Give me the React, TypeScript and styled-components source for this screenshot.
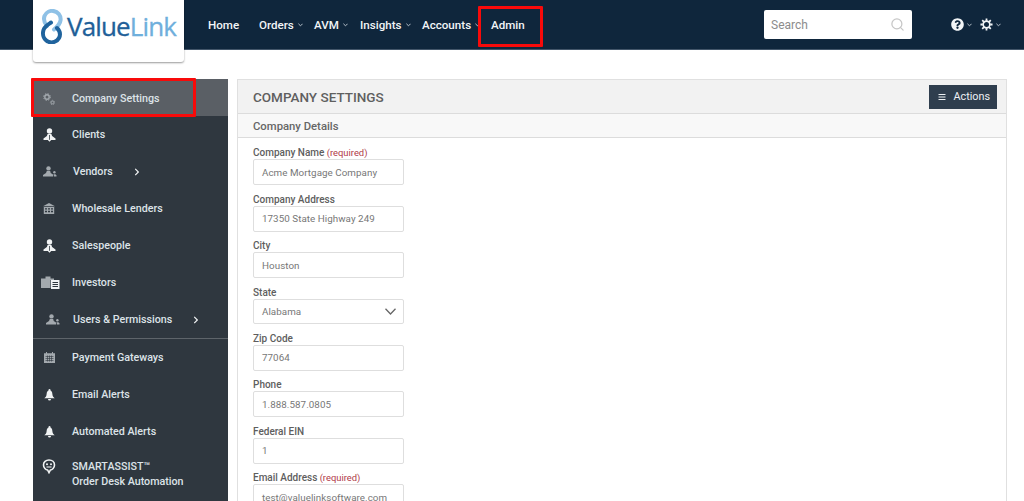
import React from 'react';
import styled, { createGlobalStyle } from 'styled-components';
import { FiSearch } from 'react-icons/fi';
import { FaQuestionCircle, FaBars, FaChevronRight } from 'react-icons/fa';

const GlobalStyle = createGlobalStyle`
  html, body {
    margin: 0;
    padding: 0;
    height: 100%;
    overflow: hidden;
    background: #fff;
    font-family: Roboto, "Liberation Sans", sans-serif;
  }
  * { box-sizing: border-box; }
`;

const Page = styled.div`
  position: relative;
  width: 1024px;
  height: 501px;
  overflow: hidden;
`;

const Header = styled.header`
  display: flex;
  align-items: center;
  height: 50px;
  padding-left: 208px;
  background: #0f263c;
  border-bottom: 1px solid #43566a;
`;

const LogoBox = styled.div`
  position: absolute;
  left: 33px;
  top: 0;
  width: 151px;
  height: 62px;
  display: flex;
  align-items: center;
  gap: 4px;
  padding: 0 0 10px 8px;
  background: #fff;
  border-radius: 0 0 3px 3px;
  box-shadow: 0 1px 2px rgba(0, 0, 0, 0.4);
`;

const LogoText = styled.span`
  font-family: "Open Sans", sans-serif;
  font-size: 26px;
  letter-spacing: -0.85px;
  color: #215f98;
  -webkit-text-stroke: 0.3px #215f98;
  span {
    color: #6fafdc;
    -webkit-text-stroke: 0.3px #6fafdc;
  }
`;

const NavItem = styled.div<{ $w: number }>`
  display: flex;
  align-items: center;
  width: ${(p) => p.$w}px;
  font-size: 11.6px;
  font-weight: 500;
  color: #f2f5f7;
`;

const Caret = styled.svg`
  width: 5px;
  height: 4px;
  margin-left: 4px;
  fill: none;
  stroke: #b8c2cb;
  stroke-width: 1.2;
`;

const HeaderRight = styled.div`
  display: flex;
  align-items: center;
  margin-left: auto;
  padding-right: 15px;
  color: #f2f5f7;
`;

const SearchBox = styled.div`
  display: flex;
  align-items: center;
  justify-content: space-between;
  width: 148px;
  height: 29px;
  margin-right: 39px;
  padding: 0 7px;
  background: #fff;
  border-radius: 2px;
  font-size: 12px;
  color: #8c8c8c;
  svg { width: 15px; height: 15px; color: #c6c6c6; }
`;

const IconButton = styled.div`
  display: flex;
  align-items: center;
  margin-right: 8px;
  svg:first-child { width: 13px; height: 13px; }
  ${Caret} { margin-left: 3px; }
`;

const Body = styled.div`
  display: flex;
  align-items: flex-start;
  gap: 9px;
  padding: 29px 17px 0 33px;
`;

const Sidebar = styled.nav`
  width: 195px;
  flex: none;
  background: #2f373f;
  height: 430px;
`;

const SideRow = styled.div<{ $active?: boolean; $divider?: boolean; $tall?: boolean }>`
  display: flex;
  align-items: ${(p) => (p.$tall ? 'flex-start' : 'center')};
  height: ${(p) => (p.$tall ? '56px' : p.$divider ? '38px' : '37px')};
  padding-top: ${(p) => (p.$tall ? '9px' : p.$active ? '2px' : '0')};
  background: ${(p) => (p.$active ? '#5a5f65' : 'transparent')};
  border-top: ${(p) => (p.$divider ? '1px solid #5e646a' : 'none')};
  font-size: 10.7px;
  font-weight: 500;
  line-height: 15px;
  color: #dde3e8;
`;

const SideIcon = styled.div<{ $w?: number; $left?: number; $dim?: boolean }>`
  display: flex;
  justify-content: center;
  flex: none;
  width: ${(p) => p.$w ?? 39}px;
  padding-left: ${(p) => p.$left ?? 0}px;
  padding-right: ${(p) => (p.$w ?? 39) - 32}px;
  color: ${(p) => (p.$dim ? '#a3a9ae' : '#f1f3f4')};
`;

const Chevron = styled.span<{ $gap: number }>`
  display: flex;
  margin-left: ${(p) => p.$gap}px;
  color: #f1f3f4;
  svg { width: 8px; height: 8px; }
`;

const Panel = styled.main`
  flex: 1;
  height: 430px;
  background: #fff;
  border: 1px solid #e0e0e0;
  border-bottom: none;
`;

const TitleBar = styled.div`
  display: flex;
  align-items: center;
  justify-content: space-between;
  height: 34px;
  padding: 0 9px 0 15px;
  background: #f2f2f2;
  border-bottom: 1px solid #dcdcdc;
`;

const Title = styled.h1`
  margin: 0;
  font-size: 13.5px;
  font-weight: 500;
  color: #5f5f5f;
`;

const ActionsButton = styled.button`
  display: flex;
  align-items: center;
  gap: 7px;
  height: 24px;
  padding: 0 7px 0 9px;
  background: #2f3e4e;
  border: none;
  font-family: inherit;
  font-size: 10.8px;
  color: #eef1f4;
  svg { width: 8px; height: 8px; }
`;

const SubBar = styled.div`
  display: flex;
  align-items: center;
  height: 24px;
  padding: 1px 0 0 15px;
  background: #f8f8f8;
  border-bottom: 1px solid #dcdcdc;
  font-size: 11.3px;
  font-weight: 500;
  color: #666;
`;

const Form = styled.form`
  display: flex;
  flex-direction: column;
  padding: 8.4px 0 0 15px;
`;

const Field = styled.div`
  display: flex;
  flex: none;
  flex-direction: column;
  width: 151px;
  height: 46.4px;
`;

const Label = styled.label`
  height: 13px;
  line-height: 13px;
  font-size: 10px;
  font-weight: 500;
  color: #5e5e5e;
  white-space: nowrap;
  em {
    font-style: normal;
    font-weight: 400;
    font-size: 9.4px;
    color: #b03a48;
  }
`;

const Input = styled.div<{ $select?: boolean }>`
  display: flex;
  align-items: center;
  justify-content: space-between;
  height: ${(p) => (p.$select ? '25px' : '26px')};
  padding: 0 7px 0 8px;
  background: #fff;
  border: 1px solid #dedede;
  border-radius: 2px;
  font-size: 9.8px;
  letter-spacing: 0.05px;
  color: #777;
`;

const SelectArrow = styled.svg`
  width: 11px;
  height: 7px;
  fill: none;
  stroke: #666;
  stroke-width: 1.3;
`;

const Highlight = styled.div<{ $l: number; $t: number; $w: number; $h: number }>`
  position: absolute;
  left: ${(p) => p.$l}px;
  top: ${(p) => p.$t}px;
  width: ${(p) => p.$w}px;
  height: ${(p) => p.$h}px;
  border: 3px solid #f80a0a;
  border-radius: 1px;
`;

const LinkMark = () => (
  <svg width="22" height="35" viewBox="0 0 22 35" fill="none" strokeWidth="4" strokeLinecap="round">
    <path d="M6 17C3 13.5 2.5 10 3.5 7C5 3.2 9 1.6 12 1.9C17 2.3 20 6.5 19.6 11C19.2 15 16 18 13 20.5" stroke="#8fc1e6" />
    <path d="M16 19C19 22 19.5 26 18 29C16 33 11 34 8 33C3 31 1 26 2.5 21C3.5 17.5 7 15.5 10 13.5" stroke="#1f639d" />
  </svg>
);

const CaretIcon = () => (
  <Caret viewBox="0 0 6 4">
    <path d="M0.5 0.5 L3 3 L5.5 0.5" />
  </Caret>
);

const GearIcon = () => (
  <svg viewBox="0 0 14 14" fill="none" stroke="currentColor">
    <circle cx="7" cy="7" r="3.6" strokeWidth="1.8" />
    <path d="M7 0.5v2.5M7 11v2.500M0.500 7h2.500M11 7h2.500M2.400 2.400l1.800 1.800M9.800 9.800l1.800 1.800M2.400 11.600l1.800-1.800M9.800 4.200l1.800-1.800" strokeWidth="1.900" />
  </svg>
);

const GearsIcon = () => (
  <svg width="12" height="12" viewBox="0 0 12 12" fill="none" stroke="currentColor">
    <circle cx="4" cy="4" r="2.200" strokeWidth="1.400" />
    <circle cx="4" cy="4" r="3.400" strokeWidth="1" strokeDasharray="1.300 1.400" />
    <circle cx="9.500" cy="9.500" r="1.300" strokeWidth="1" />
    <circle cx="9.500" cy="9.500" r="2.200" strokeWidth="0.800" strokeDasharray="1 0.800" />
  </svg>
);

const PersonIcon = () => (
  <svg width="13" height="14" viewBox="0 0 13 14" fill="currentColor">
    <circle cx="6.500" cy="3" r="2.700" />
    <path d="M4.600 6h3.800l.7 2 3.400 2.400V12H8.200l-1.700 1.800L4.800 12H.5v-1.600L3.900 8z" />
    <path d="M6.500 7v4.800" stroke="#2f373f" strokeWidth="0.800" />
  </svg>
);

const TeamIcon = () => (
  <svg width="14" height="11" viewBox="0 0 14 11" fill="currentColor">
    <circle cx="5.500" cy="2.400" r="2.200" />
    <path d="M3.800 5h3.400l.5 2L10 8.600V10.500H0V9l3-2z" />
    <circle cx="11.400" cy="6.200" r="1.200" />
    <path d="M10.500 8.200h1.800l1.200 1v1.300h-2.600z" />
  </svg>
);

const BankIcon = () => (
  <svg width="12" height="11" viewBox="0 0 12 11" fill="currentColor">
    <path d="M6 0 12 3.200H0z" />
    <path d="M.8 4h10.400v7H.8zM2 5.300v1.300h2V5.300zm3 0v1.300h2V5.300zm3 0v1.300h2V5.300zM2 7.800v1.400h2V7.800zm3 0v1.400h2V7.800zm3 0v1.400h2V7.800z" fillRule="evenodd" />
  </svg>
);

const InvestorsIcon = () => (
  <svg width="19" height="13" viewBox="0 0 19 13" style={{ marginLeft: 2 }}>
    <path d="M0 2.500h4.500V.5h5v2H13V4H9.500v8H0Z" fill="#a3a9ae" />
    <rect x="10" y="4" width="8.500" height="9" fill="#f1f3f4" />
    <path d="M11.500 6.500h5.500M11.500 8.500h5.500M11.500 10.500h5.500" stroke="#2f373f" strokeWidth="1" />
  </svg>
);

const CalendarIcon = () => (
  <svg width="11" height="11" viewBox="0 0 11 11" fill="currentColor">
    <path d="M2 0h1v1.200h5V0h1v1.200h2V11H0V1.200h2z" />
    <path d="M1.500 4.500h8M1.500 6.500h8M1.500 8.500h8M3.500 3.500v6M5.500 3.500v6M7.500 3.500v6" stroke="#2f373f" strokeWidth="0.600" />
  </svg>
);

const BellIcon = () => (
  <svg width="11" height="12" viewBox="0 0 11 12" fill="currentColor">
    <circle cx="5.500" cy="1" r="1" />
    <path d="M5.500 1.300C3.500 1.300 2.800 3 2.600 5.200 2.400 7.400 1.500 8.200.3 9.200h10.400C9.500 8.200 8.600 7.400 8.400 5.200 8.200 3 7.500 1.300 5.500 1.300Z" />
    <path d="M4 10h3a1.500 1.500 0 0 1-3 0Z" />
  </svg>
);

const BotIcon = () => (
  <svg width="14" height="15" viewBox="0 0 16 18" fill="none">
    <path d="M8 1.200c3.800 0 6.600 2.600 6.600 6s-2.800 6-4.900 6L8 16.400l-1.700-3.200c-2.100 0-4.900-2.600-4.900-6s2.800-6 6.600-6Z" stroke="currentColor" strokeWidth="1.900" />
    <circle cx="5.600" cy="6.400" r="1.200" fill="currentColor" />
    <circle cx="10.400" cy="6.400" r="1.200" fill="currentColor" />
    <path d="M5 9.600h6" stroke="currentColor" strokeWidth="1.300" />
  </svg>
);

const navItems = [
  { label: 'Home', w: 51 },
  { label: 'Orders', w: 55, caret: true },
  { label: 'AVM', w: 46, caret: true },
  { label: 'Insights', w: 62, caret: true },
  { label: 'Accounts', w: 69, caret: true },
  { label: 'Admin', w: 50 },
];

const fields = [
  { label: 'Company Name', required: true, value: 'Acme Mortgage Company' },
  { label: 'Company Address', value: '17350 State Highway 249' },
  { label: 'City', value: 'Houston' },
  { label: 'State', value: 'Alabama', select: true },
  { label: 'Zip Code', value: '77064' },
  { label: 'Phone', value: '1.888.587.0805' },
  { label: 'Federal EIN', value: '1' },
  { label: 'Email Address', required: true, value: 'test@valuelinksoftware.com' },
];

export default function App() {
  return (
    <Page>
      <GlobalStyle />
      <Header>
        {navItems.map((item) => (
          <NavItem key={item.label} $w={item.w}>
            {item.label}
            {item.caret && <CaretIcon />}
          </NavItem>
        ))}
        <HeaderRight>
          <SearchBox>
            Search
            <FiSearch />
          </SearchBox>
          <IconButton>
            <FaQuestionCircle />
            <CaretIcon />
          </IconButton>
          <IconButton>
            <GearIcon />
            <CaretIcon />
          </IconButton>
        </HeaderRight>
      </Header>
      <LogoBox>
        <LinkMark />
        <LogoText>
          Value<span>Link</span>
        </LogoText>
      </LogoBox>

      <Body>
        <Sidebar>
          <SideRow $active>
            <SideIcon $dim><GearsIcon /></SideIcon>
            Company Settings
          </SideRow>
          <SideRow>
            <SideIcon><PersonIcon /></SideIcon>
            Clients
          </SideRow>
          <SideRow>
            <SideIcon $w={40} $left={2} $dim><TeamIcon /></SideIcon>
            Vendors
            <Chevron $gap={20}><FaChevronRight /></Chevron>
          </SideRow>
          <SideRow>
            <SideIcon $dim><BankIcon /></SideIcon>
            Wholesale Lenders
          </SideRow>
          <SideRow>
            <SideIcon><PersonIcon /></SideIcon>
            Salespeople
          </SideRow>
          <SideRow>
            <SideIcon><InvestorsIcon /></SideIcon>
            Investors
          </SideRow>
          <SideRow>
            <SideIcon $w={40} $left={7} $dim><TeamIcon /></SideIcon>
            Users &amp; Permissions
            <Chevron $gap={20}><FaChevronRight /></Chevron>
          </SideRow>
          <SideRow $divider>
            <SideIcon $dim><CalendarIcon /></SideIcon>
            Payment Gateways
          </SideRow>
          <SideRow>
            <SideIcon><BellIcon /></SideIcon>
            Email Alerts
          </SideRow>
          <SideRow>
            <SideIcon><BellIcon /></SideIcon>
            Automated Alerts
          </SideRow>
          <SideRow $tall>
            <SideIcon><BotIcon /></SideIcon>
            <div>
              SMARTASSIST™
              <br />
              Order Desk Automation
            </div>
          </SideRow>
        </Sidebar>

        <Panel>
          <TitleBar>
            <Title>COMPANY SETTINGS</Title>
            <ActionsButton type="button">
              <FaBars />
              Actions
            </ActionsButton>
          </TitleBar>
          <SubBar>Company Details</SubBar>
          <Form>
            {fields.map((f) => (
              <Field key={f.label}>
                <Label>
                  {f.label}
                  {f.required && <em> (required)</em>}
                </Label>
                <Input $select={f.select}>
                  {f.value}
                  {f.select && (
                    <SelectArrow viewBox="0 0 11 7">
                      <path d="M0.5 0.8 L5.5 6 L10.5 0.8" />
                    </SelectArrow>
                  )}
                </Input>
              </Field>
            ))}
          </Form>
        </Panel>
      </Body>

      <Highlight $l={31} $t={78} $w={165} $h={39} />
      <Highlight $l={478} $t={6} $w={65} $h={41} />
    </Page>
  );
}
